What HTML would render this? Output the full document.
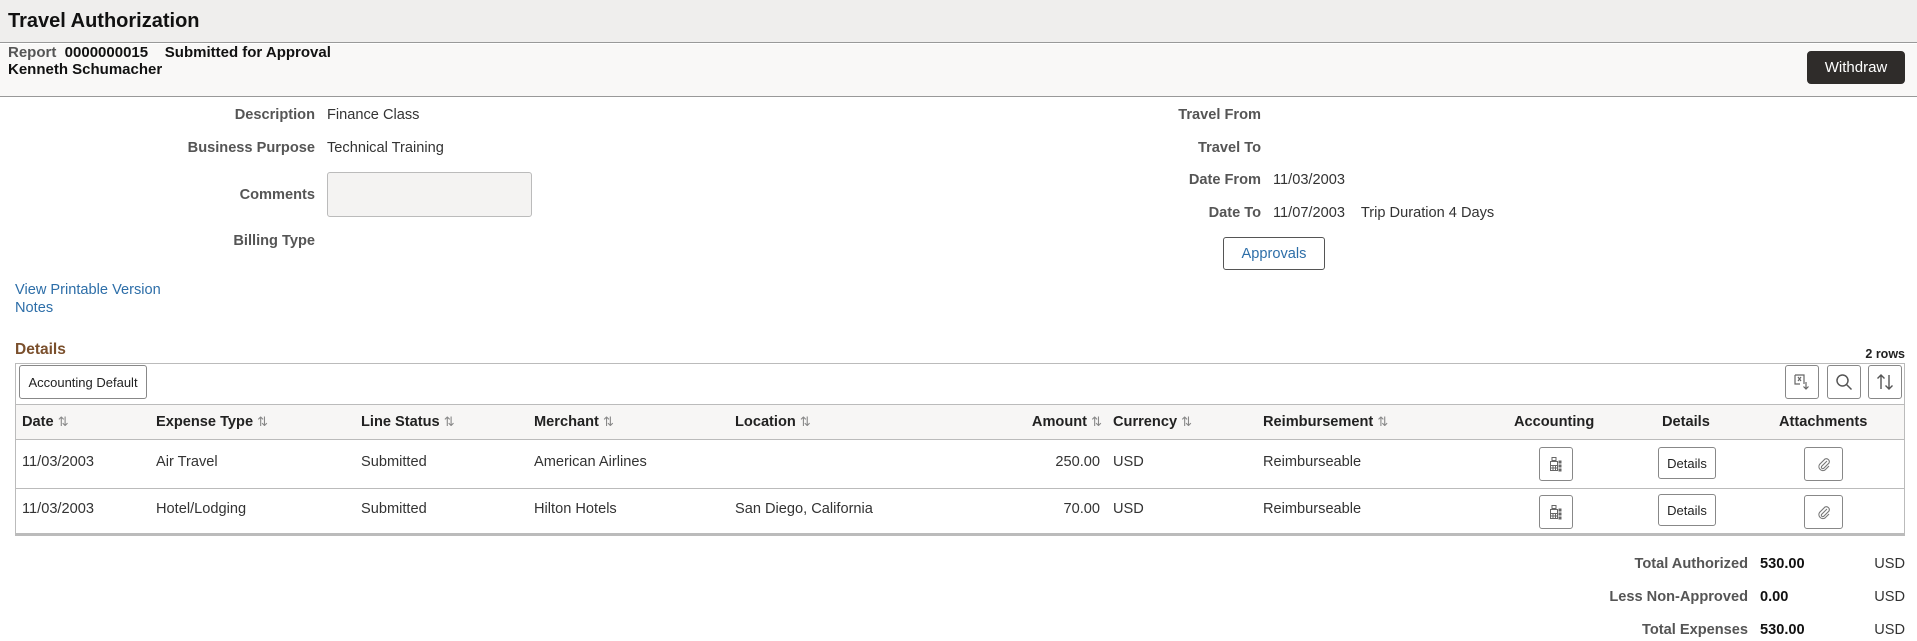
<!DOCTYPE html>
<html><head><meta charset="utf-8"><style>
*{margin:0;padding:0;box-sizing:border-box}
body{width:1917px;height:641px;background:#fff;font-family:"Liberation Sans",Arial,sans-serif;font-size:14.6px;color:#333;position:relative;overflow:hidden}
.a{position:absolute;white-space:nowrap;line-height:16px}
.lbl{font-weight:bold;color:#555;text-align:right}
.v{color:#333}
.th{font-weight:bold;color:#222}
.s{color:#888;font-weight:normal;font-size:13px}
.btn{position:absolute;border:1px solid #888;border-radius:3px;background:#fff;display:flex;align-items:center;justify-content:center}
</style></head><body>
<div style="position:absolute;left:0;top:0;width:1917px;height:43px;background:#efeeed;border-bottom:1px solid #999"></div>
<div class="a" style="left:8px;top:11px;font-size:20px;line-height:21px;font-weight:bold;color:#111">Travel Authorization</div>
<div style="position:absolute;left:0;top:44px;width:1917px;height:53px;background:#f9f8f7;border-bottom:1px solid #999"></div>
<div class="a" style="left:8px;top:45px;font-weight:bold;color:#111;font-size:15px"><span style="color:#555">Report</span>&nbsp; 0000000015 &nbsp;&nbsp; Submitted for Approval</div>
<div class="a" style="left:8px;top:62px;font-weight:bold;color:#111;font-size:15px">Kenneth Schumacher</div>
<div class="btn" style="left:1807px;top:51px;width:98px;height:33px;background:#2f2c2a;border-color:#2f2c2a;border-radius:4px;color:#fff;font-size:15px">Withdraw</div>

<div class="a lbl" style="right:1602px;top:107px">Description</div><div class="a v" style="left:327px;top:107px">Finance Class</div>
<div class="a lbl" style="right:1602px;top:140px">Business Purpose</div><div class="a v" style="left:327px;top:140px">Technical Training</div>
<div class="a lbl" style="right:1602px;top:187px">Comments</div>
<div style="position:absolute;left:327px;top:172px;width:205px;height:45px;background:#f4f3f2;border:1px solid #bbb;border-radius:3px"></div>
<div class="a lbl" style="right:1602px;top:233px">Billing Type</div>

<div class="a lbl" style="right:656px;top:107px">Travel From</div>
<div class="a lbl" style="right:656px;top:140px">Travel To</div>
<div class="a lbl" style="right:656px;top:172px">Date From</div><div class="a v" style="left:1273px;top:172px">11/03/2003</div>
<div class="a lbl" style="right:656px;top:205px">Date To</div><div class="a v" style="left:1273px;top:205px">11/07/2003 &nbsp;&nbsp; Trip Duration 4 Days</div>
<div class="btn" style="left:1223px;top:237px;width:102px;height:33px;color:#2d6ea8;border-color:#555">Approvals</div>

<div class="a" style="left:15px;top:282px;color:#2d6ea8">View Printable Version</div>
<div class="a" style="left:15px;top:300px;color:#2d6ea8">Notes</div>
<div class="a" style="left:15px;top:342px;font-weight:bold;font-size:15.5px;color:#7a4f2c">Details</div>
<div class="a" style="right:12px;top:346px;font-weight:bold;font-size:12.5px;color:#222">2 rows</div>

<div style="position:absolute;left:15px;top:363px;width:1890px;height:173px;border:1px solid #bbb;border-bottom:3px solid #bbb"></div>
<div class="btn" style="left:19px;top:365px;width:128px;height:34px;font-size:13px;color:#222">Accounting Default</div>
<div class="btn" style="left:1785px;top:365px;width:34px;height:34px"><svg width="18" height="18" viewBox="0 0 18 18" fill="none" stroke="#666" stroke-width="1.2"><path d="M2 2h9v9M2 2v9h5"/><path d="M5 4l3 4M8 4l-3 4"/><path d="M13 9v7M10.5 13.5l2.5 2.5 2.5-2.5"/></svg></div>
<div class="btn" style="left:1827px;top:365px;width:34px;height:34px"><svg width="18" height="18" viewBox="0 0 18 18" fill="none" stroke="#555" stroke-width="1.5"><circle cx="7.5" cy="7.5" r="5.5"/><path d="M11.5 11.5l5 5"/></svg></div>
<div class="btn" style="left:1868px;top:365px;width:34px;height:34px"><svg width="18" height="18" viewBox="0 0 18 18" fill="none" stroke="#555" stroke-width="1.4"><path d="M5 16V2M1.5 5.5L5 2l3.5 3.5M13 2v14M9.5 12.5L13 16l3.5-3.5"/></svg></div>

<div style="position:absolute;left:16px;top:404px;width:1888px;height:36px;background:#f7f6f5;border-top:1px solid #bbb;border-bottom:1px solid #bbb"></div>
<div style="position:absolute;left:16px;top:488px;width:1888px;height:1px;background:#bbb"></div>
<div class="a th" style="left:22px;top:414px">Date <span class="s">⇅</span></div>
<div class="a th" style="left:156px;top:414px">Expense Type <span class="s">⇅</span></div>
<div class="a th" style="left:361px;top:414px">Line Status <span class="s">⇅</span></div>
<div class="a th" style="left:534px;top:414px">Merchant <span class="s">⇅</span></div>
<div class="a th" style="left:735px;top:414px">Location <span class="s">⇅</span></div>
<div class="a th" style="right:815px;top:414px">Amount <span class="s">⇅</span></div>
<div class="a th" style="left:1113px;top:414px">Currency <span class="s">⇅</span></div>
<div class="a th" style="left:1263px;top:414px">Reimbursement <span class="s">⇅</span></div>
<div class="a th" style="left:1514px;top:414px">Accounting</div>
<div class="a th" style="left:1662px;top:414px">Details</div>
<div class="a th" style="left:1779px;top:414px">Attachments</div>

<div class="a v" style="left:22px;top:454px">11/03/2003</div>
<div class="a v" style="left:156px;top:454px">Air Travel</div>
<div class="a v" style="left:361px;top:454px">Submitted</div>
<div class="a v" style="left:534px;top:454px">American Airlines</div>
<div class="a v" style="right:817px;top:454px">250.00</div>
<div class="a v" style="left:1113px;top:454px">USD</div>
<div class="a v" style="left:1263px;top:454px">Reimburseable</div>

<div class="a v" style="left:22px;top:501px">11/03/2003</div>
<div class="a v" style="left:156px;top:501px">Hotel/Lodging</div>
<div class="a v" style="left:361px;top:501px">Submitted</div>
<div class="a v" style="left:534px;top:501px">Hilton Hotels</div>
<div class="a v" style="left:735px;top:501px">San Diego, California</div>
<div class="a v" style="right:817px;top:501px">70.00</div>
<div class="a v" style="left:1113px;top:501px">USD</div>
<div class="a v" style="left:1263px;top:501px">Reimburseable</div>

<div class="btn" style="left:1539px;top:447px;width:34px;height:34px"><svg width="16" height="16" viewBox="0 0 16 16" fill="none" stroke="#666" stroke-width="1"><rect x="4" y="1.5" width="4" height="3"/><rect x="2.5" y="5.5" width="7" height="9"/><path d="M2.5 9.5h7M2.5 12h7M5 9.5v5M7.5 9.5v5"/><rect x="11" y="5" width="2" height="2" fill="#666"/><rect x="11" y="9" width="2" height="2" fill="#666"/><rect x="11" y="13" width="2" height="2" fill="#666"/></svg></div>
<div class="btn" style="left:1539px;top:495px;width:34px;height:34px"><svg width="16" height="16" viewBox="0 0 16 16" fill="none" stroke="#666" stroke-width="1"><rect x="4" y="1.5" width="4" height="3"/><rect x="2.5" y="5.5" width="7" height="9"/><path d="M2.5 9.5h7M2.5 12h7M5 9.5v5M7.5 9.5v5"/><rect x="11" y="5" width="2" height="2" fill="#666"/><rect x="11" y="9" width="2" height="2" fill="#666"/><rect x="11" y="13" width="2" height="2" fill="#666"/></svg></div>
<div class="btn" style="left:1658px;top:447px;width:58px;height:32px;font-size:13px;color:#222">Details</div>
<div class="btn" style="left:1658px;top:494px;width:58px;height:32px;font-size:13px;color:#222">Details</div>
<div class="btn" style="left:1804px;top:447px;width:39px;height:34px"><svg width="16" height="16" viewBox="0 0 16 16" fill="none" stroke="#777" stroke-width="1.1"><path d="M11 5l-5.5 5.5a1.5 1.5 0 0 0 2 2L13 7a3 3 0 0 0-4-4L3.5 8.5a4 4 0 0 0 5.5 5.5L13 10"/></svg></div>
<div class="btn" style="left:1804px;top:495px;width:39px;height:34px"><svg width="16" height="16" viewBox="0 0 16 16" fill="none" stroke="#777" stroke-width="1.1"><path d="M11 5l-5.5 5.5a1.5 1.5 0 0 0 2 2L13 7a3 3 0 0 0-4-4L3.5 8.5a4 4 0 0 0 5.5 5.5L13 10"/></svg></div>

<div class="a lbl" style="right:169px;top:556px">Total Authorized</div><div class="a" style="left:1760px;top:556px;font-weight:bold;color:#111">530.00</div><div class="a v" style="right:12px;top:556px">USD</div>
<div class="a lbl" style="right:169px;top:589px">Less Non-Approved</div><div class="a" style="left:1760px;top:589px;font-weight:bold;color:#111">0.00</div><div class="a v" style="right:12px;top:589px">USD</div>
<div class="a lbl" style="right:169px;top:622px">Total Expenses</div><div class="a" style="left:1760px;top:622px;font-weight:bold;color:#111">530.00</div><div class="a v" style="right:12px;top:622px">USD</div>
</body></html>
